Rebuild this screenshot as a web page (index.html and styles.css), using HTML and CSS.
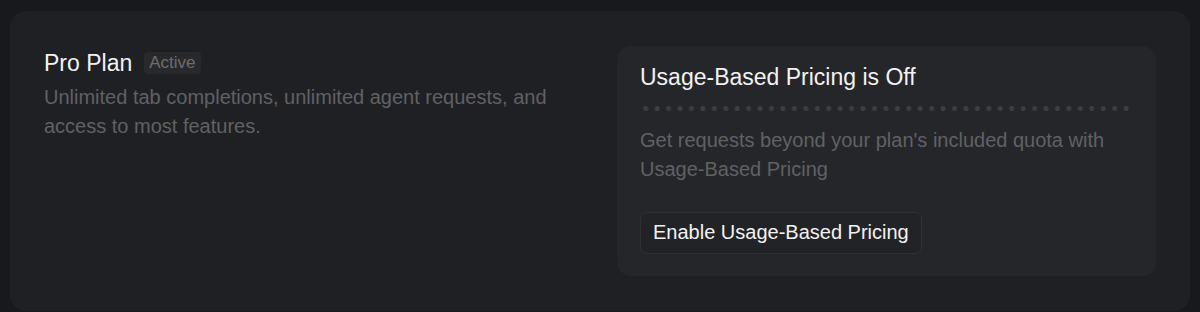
FILE: index.html
```html
<!DOCTYPE html>
<html>
<head>
<meta charset="utf-8">
<link rel="stylesheet" href="styles.css">
</head>
<body>
<div class="card">
  <div class="plan">
    <div class="plan-head">
      <span class="plan-title">Pro Plan</span>
      <span class="badge">Active</span>
    </div>
    <p class="plan-desc">Unlimited tab completions, unlimited agent requests, and access to most features.</p>
  </div>
  <div class="usage">
    <div class="usage-title">Usage-Based Pricing is Off</div>
    <div class="dots"></div>
    <p class="usage-desc">Get requests beyond your plan's included quota with Usage-Based Pricing</p>
    <button class="btn">Enable Usage-Based Pricing</button>
  </div>
</div>
</body>
</html>
```
FILE: styles.css
```css
* { box-sizing: border-box; }
html, body { margin: 0; padding: 0; }
body {
  background: #18191c;
  font-family: "Liberation Sans", Arial, sans-serif;
  width: 1200px;
  height: 312px;
  overflow: hidden;
  padding: 11px 10px 0 10px;
}
.card {
  background: #1f2023;
  border-radius: 16px;
  height: 300px;
  padding: 35px 34px 35px 34px;
  display: flex;
  justify-content: space-between;
}
.plan {
  width: 540px;
}
.plan-head {
  display: flex;
  align-items: center;
  gap: 12px;
}
.plan-title {
  color: #f2f2f3;
  font-size: 23px;
  line-height: 34px;
}
.badge {
  background: #29292c;
  color: #6c6d71;
  font-size: 17px;
  line-height: 22px;
  padding: 0 5px;
  border-radius: 4px;
}
.plan-desc {
  margin: 3px 0 0 0;
  color: #606165;
  font-size: 20px;
  line-height: 28.8px;
}
.usage {
  width: 539px;
  height: 230px;
  background: #252629;
  border-radius: 14px;
  padding: 14px 24px 22px 23px;
}
.usage-title {
  color: #f2f2f3;
  font-size: 23px;
  line-height: 34px;
}
.dots {
  margin-top: 12px;
  height: 5px;
  width: 492px;
  background-image: radial-gradient(circle, #3d3e42 2.2px, rgba(61,62,66,0) 2.8px);
  background-size: 11.45px 5px;
  background-position: 0 0;
}
.usage-desc {
  margin: 15px 0 0 0;
  color: #606165;
  font-size: 20px;
  line-height: 28.8px;
}
.btn {
  display: block;
  margin-top: 28px;
  height: 42px;
  padding: 0 12px;
  background: #222326;
  border: 1px solid #303134;
  border-radius: 7px;
  color: #f2f2f3;
  font-family: "Liberation Sans", Arial, sans-serif;
  font-size: 20px;
}
```
